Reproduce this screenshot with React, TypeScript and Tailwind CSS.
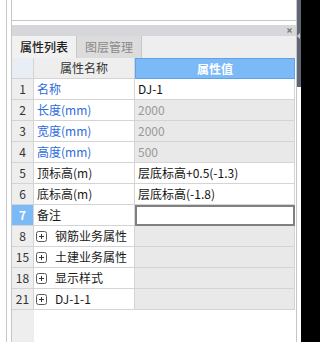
import React from 'react';

type Row = {
  no: string;
  name: string;
  value?: string;
  nameColor: string;
  valueBg: 'white' | 'gray';
  group?: boolean;
  active?: boolean;
};

const ROWS: Row[] = [
  { no: '1', name: '名称', value: 'DJ-1', nameColor: 'text-[#2d6cdb]', valueBg: 'white' },
  { no: '2', name: '长度(mm)', value: '2000', nameColor: 'text-[#2d6cdb]', valueBg: 'gray' },
  { no: '3', name: '宽度(mm)', value: '2000', nameColor: 'text-[#2d6cdb]', valueBg: 'gray' },
  { no: '4', name: '高度(mm)', value: '500', nameColor: 'text-[#2d6cdb]', valueBg: 'gray' },
  { no: '5', name: '顶标高(m)', value: '层底标高+0.5(-1.3)', nameColor: 'text-[#1a1a1a]', valueBg: 'white' },
  { no: '6', name: '底标高(m)', value: '层底标高(-1.8)', nameColor: 'text-[#1a1a1a]', valueBg: 'white' },
  { no: '7', name: '备注', nameColor: 'text-[#1a1a1a]', valueBg: 'white', active: true },
  { no: '8', name: '钢筋业务属性', nameColor: 'text-[#1a1a1a]', valueBg: 'gray', group: true },
  { no: '15', name: '土建业务属性', nameColor: 'text-[#1a1a1a]', valueBg: 'gray', group: true },
  { no: '18', name: '显示样式', nameColor: 'text-[#1a1a1a]', valueBg: 'gray', group: true },
  { no: '21', name: 'DJ-1-1', nameColor: 'text-[#1a1a1a]', valueBg: 'gray', group: true },
];

function PlusBox() {
  return (
    <svg width="11" height="11" viewBox="0 0 11 11" className="shrink-0">
      <rect x="0.5" y="0.5" width="10" height="10" rx="2" fill="#fff" stroke="#5a5a5a" />
      <path d="M3 5.5h5M5.5 3v5" stroke="#333" strokeWidth="1" />
    </svg>
  );
}

export default function App() {
  return (
    <div className="flex h-[342px] w-[320px] bg-black font-['Noto_Sans_CJK_SC','Noto_Sans',sans-serif] text-[12px] leading-none">
      <div className="flex w-[301px] bg-white">
        {/* outer guide line */}
        <div className="ml-[6px] w-px bg-[#c6c6c6]" />
        <div className="w-[4px]" />

        {/* main column */}
        <div className="flex w-[286px] flex-col border-x border-[#c6c6c6]">
          {/* top white box */}
          <div className="h-[21px] border-b border-[#c6c6c6] bg-white" />
          <div className="h-[4px]" />

          {/* panel title bar */}
          <div className="flex h-[11px] items-center justify-end bg-[#d6d7db] pr-[4px]">
            <svg width="5" height="5" viewBox="0 0 5 5">
              <path d="M0.5 0.5l4 4M4.5 0.5l-4 4" stroke="#7a7a7a" strokeWidth="1.3" />
            </svg>
          </div>

          {/* tabs */}
          <div className="flex h-[22px] bg-[#eeeeee]">
            <div className="flex w-[65px] items-center justify-center border-r border-[#c8c8c8] bg-[#f1f1f1] font-medium text-[#222]">
              属性列表
            </div>
            <div className="flex w-[65px] items-center justify-center border-r border-[#c8c8c8] bg-[#dcdcdc] text-[#8a8a8a]">
              图层管理
            </div>
          </div>

          {/* table header */}
          <div className="grid h-[21px] grid-cols-[22px_101px_160px]">
            <div className="border-r border-b border-[#d4d4d4] bg-[#e9eef5]" />
            <div className="flex items-center justify-center border-r border-b border-[#d4d4d4] bg-[#eeeeee] text-[#333]">
              属性名称
            </div>
            <div className="flex items-center justify-center border border-[#5ea3ea] bg-[#7cb9f7] font-bold text-white">
              属性值
            </div>
          </div>

          {/* rows */}
          {ROWS.map((row) => (
            <div key={row.no} className="grid h-[21px] grid-cols-[22px_101px_160px]">
              <div
                className={`flex items-center justify-center border-r border-b border-[#d4d4d4] ${
                  row.active ? 'bg-[#7cb9f7] font-bold text-white' : 'bg-[#eeeeee] text-[#333]'
                }`}
              >
                {row.no}
              </div>
              <div className={`flex items-center gap-[8px] border-r border-b border-[#d4d4d4] bg-white ${row.group ? 'pl-[2px]' : 'pl-[3px]'} ${row.nameColor}`}>
                {row.group && <PlusBox />}
                <span>{row.name}</span>
              </div>
              {row.active ? (
                <div className="border-2 border-[#808080] bg-white" />
              ) : (
                <div
                  className={`flex items-center border-r border-b border-[#d4d4d4] pl-[3px] ${
                    row.valueBg === 'gray' ? 'bg-[#e9e9e9] text-[#999]' : 'bg-white text-[#111]'
                  }`}
                >
                  {row.value}
                </div>
              )}
            </div>
          ))}

          {/* empty area under the table */}
          <div className="flex flex-1">
            <div className="w-[22px] bg-[#eeeeee]" />
          </div>
        </div>

        {/* right strip */}
        <div className="flex w-[4px] flex-col">
          <div className="flex h-[87px] flex-col bg-[#5d6672] pt-[33px]">
            <svg width="3" height="6" viewBox="0 0 3 6">
              <polygon points="3,0 0,3 3,6" fill="#c9cdd2" />
            </svg>
          </div>
        </div>
      </div>
    </div>
  );
}
